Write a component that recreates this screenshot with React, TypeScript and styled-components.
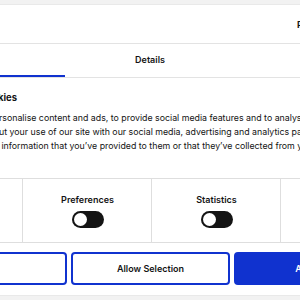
import styled, { createGlobalStyle } from "styled-components";

const GlobalStyle = createGlobalStyle`
	html, body {
		margin: 0;
		padding: 0;
		overflow: hidden;
		background: #ffffff;
	}
	body {
		font-family: Inter, "Noto Sans", "Liberation Sans", sans-serif;
		color: #141414;
	}
`;

const BLUE = "#1032cf";

const categories = [
	{ name: "Necessary", clipped: true },
	{ name: "Preferences", clipped: false },
	{ name: "Statistics", clipped: false },
	{ name: "Marketing", clipped: false },
];

function App() {
	return (
		<StPage>
			<GlobalStyle />
			<StTopBand />
			<StHeader>
				<StPowered>Powered by Cookiebot</StPowered>
			</StHeader>
			<StTabs>
				<StTabCell $width={65} $active>
					<StTabLabel>Consent</StTabLabel>
				</StTabCell>
				<StTabCell $width={170}>
					<StTabLabel>Details</StTabLabel>
				</StTabCell>
				<StTabCell $width={170}>
					<StTabLabel>About</StTabLabel>
				</StTabCell>
			</StTabs>
			<StContent>
				<StHeadingClip>
					<StHeading>This website uses cookies</StHeading>
				</StHeadingClip>
				<StText>
					rsonalise content and ads, to provide social media features and to analyse our traffic.
					<br />
					ut your use of our site with our social media, advertising and analytics partners who may combine it
					<br />
					&nbsp;information that you’ve provided to them or that they’ve collected from your use of their services.
				</StText>
			</StContent>
			<StToggleGrid>
				{categories.map((c) => (
					<StCategory key={c.name} $width={c.clipped ? 22 : 128} $last={c.name === "Marketing"}>
						<StCategoryInner>
							<StCategoryName>{c.name}</StCategoryName>
							<StSwitch>
								<StKnob />
							</StSwitch>
						</StCategoryInner>
					</StCategory>
				))}
			</StToggleGrid>
			<StButtons>
				<StButtonClip>
					<StButton>Deny</StButton>
				</StButtonClip>
				<StButton>Allow Selection</StButton>
				<StButton $primary>Allow all</StButton>
			</StButtons>
			<StBottomBand />
		</StPage>
	);
}

export default App;

const StPage = styled.div`
	width: 300px;
	height: 300px;
	overflow: hidden;
	display: flex;
	flex-direction: column;
	background: #fff;
`;

const StTopBand = styled.div`
	height: 4px;
	flex-shrink: 0;
	background: #f2f2f2;
	border-bottom: 1px solid #e9e9e9;
`;

const StHeader = styled.header`
	height: 38px;
	flex-shrink: 0;
	display: flex;
	align-items: center;
	padding-left: 297px;
	border-bottom: 1px solid #e3e3e3;
	white-space: nowrap;
`;

const StPowered = styled.span`
	font-size: 9px;
	font-weight: 700;
	color: #141414;
`;

const StTabs = styled.nav`
	height: 33px;
	flex-shrink: 0;
	display: flex;
	border-bottom: 1px solid #e3e3e3;
`;

const StTabCell = styled.div<{ $width: number; $active?: boolean }>`
	width: ${(p) => p.$width}px;
	flex-shrink: 0;
	display: flex;
	justify-content: flex-end;
	box-sizing: border-box;
	border-bottom: 2px solid ${(p) => (p.$active ? BLUE : "transparent")};
`;

const StTabLabel = styled.div`
	width: 170px;
	flex-shrink: 0;
	display: flex;
	align-items: center;
	justify-content: center;
	padding-bottom: 1px;
	font-size: 9px;
	font-weight: 600;
	color: #141414;
`;

const StContent = styled.section`
	height: 100px;
	flex-shrink: 0;
	padding-top: 13px;
	box-sizing: border-box;
`;

const StHeadingClip = styled.div`
	width: 17px;
	display: flex;
	justify-content: flex-end;
	white-space: nowrap;
`;

const StHeading = styled.h2`
	margin: 0;
	font-size: 9.5px;
	font-weight: 700;
	line-height: 14px;
	flex-shrink: 0;
`;

const StText = styled.p`
	margin: 6px 0 0 -1px;
	font-size: 8.8px;
	line-height: 14px;
	white-space: nowrap;
	color: #141414;
`;

const StToggleGrid = styled.div`
	height: 65px;
	flex-shrink: 0;
	display: flex;
	border-top: 1px solid #dedede;
	border-bottom: 1px solid #dedede;
	box-sizing: border-box;
`;

const StCategory = styled.div<{ $width: number; $last?: boolean }>`
	width: ${(p) => p.$width}px;
	flex-shrink: 0;
	display: flex;
	justify-content: flex-end;
	border-right: ${(p) => (p.$last ? "none" : "1px solid #dedede")};
`;

const StCategoryInner = styled.div`
	width: 127px;
	flex-shrink: 0;
	display: flex;
	flex-direction: column;
	align-items: center;
	padding-top: 15px;
	gap: 5px;
`;

const StCategoryName = styled.div`
	font-size: 9px;
	font-weight: 600;
	line-height: 12px;
`;

const StSwitch = styled.div`
	width: 32px;
	height: 17px;
	border-radius: 9px;
	background: #141414;
	display: flex;
	align-items: center;
	padding: 0 2px;
	box-sizing: border-box;
`;

const StKnob = styled.div`
	width: 13px;
	height: 13px;
	border-radius: 50%;
	background: #fff;
`;

const StButtons = styled.div`
	height: 33px;
	flex-shrink: 0;
	margin-top: 9px;
	display: flex;
	gap: 4px;
`;

const StButtonClip = styled.div`
	width: 67px;
	flex-shrink: 0;
	display: flex;
	justify-content: flex-end;
`;

const StButton = styled.button<{ $primary?: boolean }>`
	width: 159px;
	height: 33px;
	flex-shrink: 0;
	box-sizing: border-box;
	border: 2px solid ${BLUE};
	border-radius: 4px;
	background: ${(p) => (p.$primary ? BLUE : "#fff")};
	color: ${(p) => (p.$primary ? "#fff" : "#141414")};
	font-family: Inter, "Noto Sans", "Liberation Sans", sans-serif;
	font-size: 9px;
	font-weight: 600;
	padding: 0;
	${StButtonClip} & {
		width: 171px;
	}
`;

const StBottomBand = styled.div`
	margin-top: auto;
	height: 4px;
	flex-shrink: 0;
	background: #f2f2f2;
	border-top: 1px solid #e9e9e9;
`;
